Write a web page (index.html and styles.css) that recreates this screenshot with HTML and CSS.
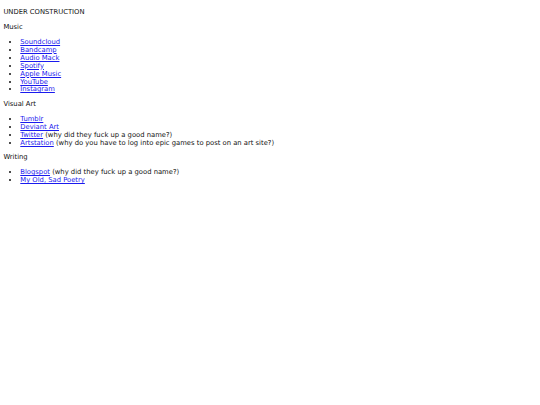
FILE: index.html
```html
<!DOCTYPE html>
<html>
<head>
<meta charset="utf-8">
<title>Under Construction</title>
<link rel="stylesheet" href="styles.css">
</head>
<body>
<p class="para">UNDER CONSTRUCTION</p>
<p class="para">Music</p>
<ul class="list">
<li><a class="link" href="#">Soundcloud</a></li>
<li><a class="link" href="#">Bandcamp</a></li>
<li><a class="link" href="#">Audio Mack</a></li>
<li><a class="link" href="#">Spotify</a></li>
<li><a class="link" href="#">Apple Music</a></li>
<li><a class="link" href="#">YouTube</a></li>
<li><a class="link" href="#">Instagram</a></li>
</ul>
<p class="para">Visual Art</p>
<ul class="list">
<li><a class="link" href="#">Tumblr</a></li>
<li><a class="link" href="#">Deviant Art</a></li>
<li><a class="link" href="#">Twitter</a> (why did they fuck up a good name?)</li>
<li><a class="link" href="#">Artstation</a> (why do you have to log into epic games to post on an art site?)</li>
</ul>
<p class="para">Writing</p>
<ul class="list">
<li><a class="link" href="#">Blogspot</a> (why did they fuck up a good name?)</li>
<li><a class="link" href="#">My Old, Sad Poetry</a></li>
</ul>
</body>
</html>
```
FILE: styles.css
```css
html {
  background: #ffffff;
}
body {
  margin: 0;
  padding: 2.6px 3.4px 0;
  font-family: "DejaVu Sans", Verdana, sans-serif;
  font-size: 6.8px;
  line-height: 7.95px;
  color: #111111;
}
.para {
  margin: 6.75px 0;
}
.list {
  margin: 6.75px 0;
  padding-left: 16.9px;
}
.link {
  color: #1a1aee;
  text-decoration: underline;
}
```
